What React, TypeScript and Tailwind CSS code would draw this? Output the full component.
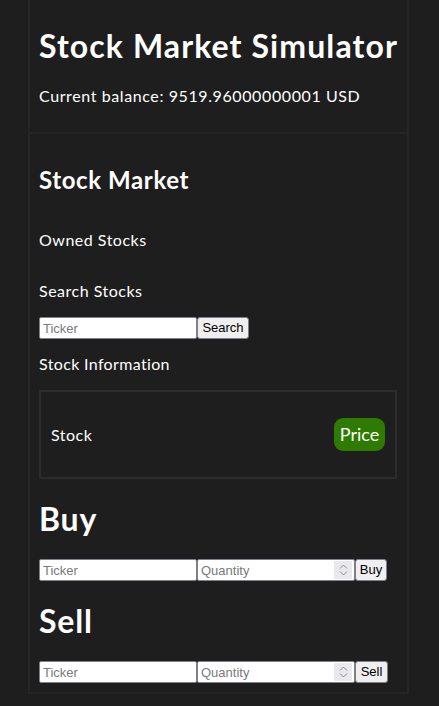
import type { ReactNode } from 'react';

const inputCls =
  "block w-[158px] h-[22px] bg-white border border-[#80808c] rounded-[2px] px-[3px] text-[13px] text-black placeholder:text-[#7a7a7a] font-['Liberation_Sans',Arial,sans-serif] outline-none";

function TextInput({ placeholder }: { placeholder: string }) {
  return <input type="text" placeholder={placeholder} className={inputCls} />;
}

function QuantityInput() {
  return (
    <div className="relative">
      <input type="text" placeholder="Quantity" className={inputCls} />
      {/* fake spin buttons */}
      <div className="absolute right-[3px] top-[2px] w-[18px] h-[18px] bg-[#e9e9ed] flex flex-col items-center justify-center gap-[2px]">
        <svg width="9" height="5" viewBox="0 0 9 5" fill="none">
          <path d="M1 4.5L4.5 1L8 4.5" stroke="#8a8a8a" strokeWidth="1" />
        </svg>
        <svg width="9" height="5" viewBox="0 0 9 5" fill="none">
          <path d="M1 0.5L4.5 4L8 0.5" stroke="#8a8a8a" strokeWidth="1" />
        </svg>
      </div>
    </div>
  );
}

function Btn({ children, w }: { children: ReactNode; w: string }) {
  return (
    <button
      className={`${w} h-[22px] bg-[#efefef] border border-[#80808c] rounded-[3px] text-[13px] text-black font-['Liberation_Sans',Arial,sans-serif] flex items-center justify-center`}
    >
      {children}
    </button>
  );
}

export default function App() {
  return (
    <div className="min-h-screen bg-[#1e1e1e] text-white font-['Lato','Open_Sans',sans-serif]">
      <div className="ml-[28px] w-[381px]">
        {/* header */}
        <section className="border-x-2 border-b-2 border-[#262626] pl-[9px] pr-[9px] pt-[27px] pb-[24px]">
          <h1 className="text-[32px] leading-[38px] font-bold tracking-[1.1px] whitespace-nowrap">Stock Market Simulator</h1>
          <p className="mt-[19px] text-[16px] leading-[24px] tracking-[0.6px]">Current balance: 9519.96000000001 USD</p>
        </section>

        {/* market */}
        <section className="border-x-2 border-b-2 border-[#262626] pl-[9px] pr-[9px] pt-[31px] pb-[9px]">
          <h2 className="text-[24px] leading-[30px] font-bold tracking-[0.6px]">Stock Market</h2>
          <h3 className="mt-[33px] text-[16px] leading-[24px] tracking-[0.5px]">Owned Stocks</h3>
          <h3 className="mt-[27px] text-[16px] leading-[24px] tracking-[0.5px]">Search Stocks</h3>
          <div className="mt-[14px] flex">
            <TextInput placeholder="Ticker" />
            <Btn w="w-[52px]">Search</Btn>
          </div>
          <h3 className="mt-[13px] text-[16px] leading-[24px] tracking-[0.35px]">Stock Information</h3>
          <div className="mt-[14px] w-[358px] h-[89px] border-2 border-[#2c2c2c] px-[10px] flex items-center justify-between">
            <span className="text-[16px] tracking-[0.5px]">Stock</span>
            <span className="h-[33px] w-[51px] rounded-[9px] bg-[#2f7a00] text-[18px] flex items-center justify-center">Price</span>
          </div>

          <h2 className="mt-[21px] text-[32px] leading-[38px] font-bold tracking-[0.8px]">Buy</h2>
          <div className="mt-[21px] flex">
            <TextInput placeholder="Ticker" />
            <QuantityInput />
            <Btn w="w-[32px]">Buy</Btn>
          </div>

          <h2 className="mt-[21px] text-[32px] leading-[38px] font-bold tracking-[0.8px]">Sell</h2>
          <div className="mt-[21px] flex">
            <TextInput placeholder="Ticker" />
            <QuantityInput />
            <Btn w="w-[33px]">Sell</Btn>
          </div>
        </section>
      </div>
    </div>
  );
}
